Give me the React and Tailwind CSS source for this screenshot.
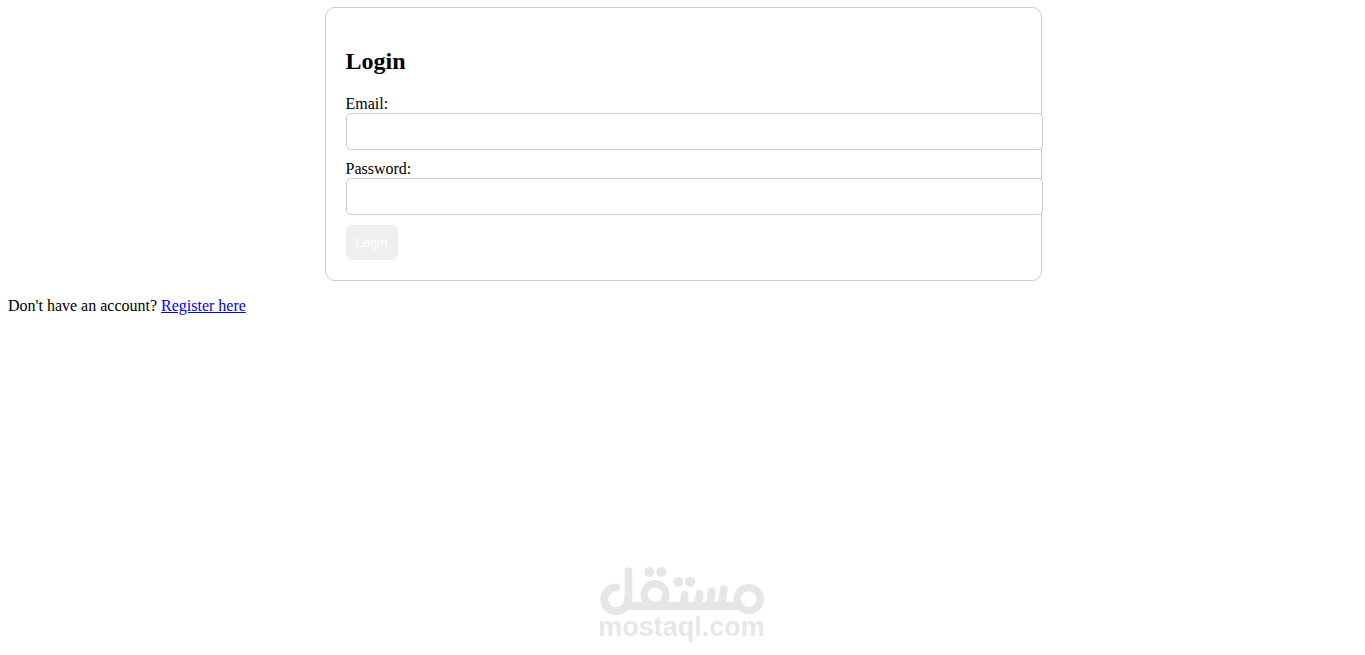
import React, { useState } from 'react';

const Field = ({ label, id, type, value, onChange }) => (
  <div className="mb-2.5">
    <label htmlFor={id} className="block w-fit">{label}</label>
    <input
      id={id}
      type={type}
      value={value}
      onChange={(e) => onChange(e.target.value)}
      className="block box-content w-full h-[15px] p-2.5 bg-white border border-[#ccc] rounded-[5px] font-['Liberation_Sans',Arial,sans-serif] text-[13px]"
    />
  </div>
);

const Watermark = () => (
  <div className="fixed bottom-[5px] left-1/2 -translate-x-1/2 pointer-events-none">
    <svg width="185" height="90" viewBox="0 0 185 90" role="img" aria-label="mostaql.com">
      <g fill="none" stroke="#e6e6e6" strokeLinecap="round" strokeLinejoin="round">
        {/* Lam and the baseline */}
        <path d="M25.4 27.6A11.8 11.8 0 1 0 37.4 39.5" strokeWidth="8" />
        <path d="M38 11V45" strokeWidth="7.6" />
        <path d="M38 45.9H147" strokeWidth="8.2" />
        {/* Qaf and meem bowls */}
        <circle cx="64.6" cy="34.7" r="10.9" strokeWidth="7.4" />
        <circle cx="158.3" cy="39.1" r="11.5" strokeWidth="7.4" />
        {/* Teeth */}
        <path d="M94 34.6L93.2 46M109.2 34L107.4 46M121.2 31.4L119.6 46M133.2 29.4L131 46" strokeWidth="7.8" />
      </g>
      <g fill="#e6e6e6">
        <circle cx="58.7" cy="11.9" r="5" />
        <circle cx="70.7" cy="11.9" r="5" />
        <circle cx="87.8" cy="21.9" r="5" />
        <circle cx="99.6" cy="21.9" r="5" />
      </g>
      <text
        x="91"
        y="76"
        textAnchor="middle"
        fill="#e7e7e7"
        className="font-['Liberation_Sans',Arial,sans-serif] font-bold text-[27px]"
      >
        mostaql.com
      </text>
    </svg>
  </div>
);

const App = () => {
  const [email, setEmail] = useState('');
  const [password, setPassword] = useState('');

  const handleSubmit = (e) => {
    e.preventDefault();
  };

  return (
    <div className="pt-[7px] pl-2 pr-[7px] bg-white text-black font-['Liberation_Serif','Times_New_Roman',serif] text-[16px] leading-[18px]">
      {/* Login card */}
      <div className="box-content w-1/2 mx-auto p-5 border border-[#ccc] rounded-[10px]">
        <h2 className="my-5 text-[24px] leading-[27px] font-bold">Login</h2>
        <form onSubmit={handleSubmit}>
          <Field label="Email:" id="email" type="email" value={email} onChange={setEmail} />
          <Field label="Password:" id="password" type="password" value={password} onChange={setPassword} />
          <button
            type="submit"
            className="block min-w-[52px] py-2.5 px-2 rounded-[5px] bg-[#efefef] text-white font-['Liberation_Sans',Arial,sans-serif] text-[13px] leading-[15px] cursor-pointer"
          >
            Login
          </button>
        </form>
      </div>

      <p className="my-4">
        Don't have an account? <a href="#register" className="text-[#0000ee] underline">Register here</a>
      </p>

      <Watermark />
    </div>
  );
};

export default App;
